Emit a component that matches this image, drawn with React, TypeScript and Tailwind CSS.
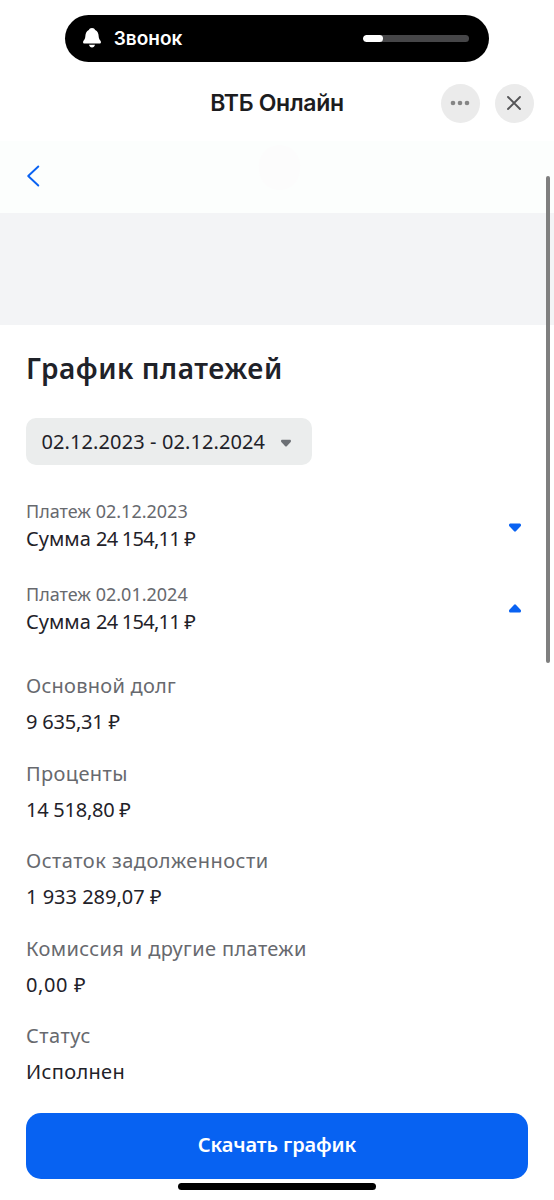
import React from 'react';

interface Payment {
  date: string;
  amount: string;
  open: boolean;
}

const payments: Payment[] = [
  { date: '02.12.2023', amount: '24 154,11 ₽', open: false },
  { date: '02.01.2024', amount: '24 154,11 ₽', open: true },
];

const details = [
  { label: 'Основной долг', value: '9 635,31 ₽', labelSpacing: 'tracking-[0.25px]', valueSpacing: 'tracking-[-0.2px]' },
  { label: 'Проценты', value: '14 518,80 ₽', labelSpacing: 'tracking-[0.38px]', valueSpacing: 'tracking-[-0.25px]' },
  { label: 'Остаток задолженности', value: '1 933 289,07 ₽', labelSpacing: 'tracking-[0.48px]', valueSpacing: 'tracking-normal' },
  { label: 'Комиссия и другие платежи', value: '0,00 ₽', labelSpacing: 'tracking-[0.37px]', valueSpacing: 'tracking-[0.6px]' },
  { label: 'Статус', value: 'Исполнен', labelSpacing: 'tracking-[0.5px]', valueSpacing: 'tracking-[0.35px]' },
];

function Caret({ up = false, className }: { up?: boolean; className: string }) {
  return (
    <svg viewBox="0 0 12 9" className={className} fill="currentColor">
      <path
        d={up
          ? 'M5.1.7a1.3 1.3 0 0 1 1.8 0l4.7 5.1c.9 1 .3 2.7-1.1 2.7h-9C.1 8.5-.5 6.8.4 5.8z'
          : 'M5.1 8.3a1.3 1.3 0 0 0 1.8 0l4.7-5.1C12.5 2.2 11.9.5 10.5.5h-9C.1.5-.5 2.2.4 3.2z'}
      />
    </svg>
  );
}

function RingerPill() {
  return (
    <div className="mx-auto mt-[14.5px] w-[424.5px] h-[47.5px] rounded-full bg-black flex items-center pl-[18px] pr-[20.5px]">
      <svg viewBox="0 0 54 59" className="w-[18px] h-[19.7px] shrink-0" fill="white">
        <path d="M27 0c5 0 8 2.500 9.500 6C44 9 46.500 17 47 25c.3 7 3 10 5.500 13.500 2.800 4 1 8-3 8h-45c-4 0-5.800-4-3-8C4 35 6.700 32 7 25 7.500 17 10 9 17.500 6 19 2.500 22 0 27 0z" />
        <path d="M18 50.500h18c-1 5-4.500 8-9 8s-8-3-9-8z" />
      </svg>
      <span className="ml-[13px] mt-[1px] text-[19px] leading-6 font-semibold text-white font-['Inter',sans-serif]">Звонок</span>
      <div className="ml-auto w-[106px] h-[7px] rounded-full bg-[#464648] overflow-hidden">
        <div className="w-[20px] h-full rounded-full bg-white" />
      </div>
    </div>
  );
}

function TitleBar() {
  return (
    <div className="relative h-[78.5px] flex items-center justify-center pt-[4px]">
      <h1 className="text-[23px] leading-8 font-semibold tracking-[-0.3px] text-[#1c1c1e] font-['Inter',sans-serif]">ВТБ Онлайн</h1>
      <div className="absolute right-[20.5px] top-[22px] flex gap-[15.5px]">
        <button className="size-[38.5px] rounded-full bg-[#ebebeb] flex items-center justify-center">
          <svg viewBox="0 0 20 6" className="w-[20px] h-[6px]" fill="#858585">
            <circle cx="3" cy="3" r="2.3" />
            <circle cx="10" cy="3" r="2.3" />
            <circle cx="17" cy="3" r="2.3" />
          </svg>
        </button>
        <button className="size-[38.5px] rounded-full bg-[#ebebeb] flex items-center justify-center">
          <svg viewBox="0 0 14 14" className="size-[14px]" stroke="#555557" strokeWidth="1.9" strokeLinecap="round">
            <path d="M1 1l12 12M13 1L1 13" />
          </svg>
        </button>
      </div>
    </div>
  );
}

export default function App() {
  return (
    <div className="relative w-[554px] h-[1200px] bg-white overflow-hidden flex flex-col text-[#1f2229] font-['Noto_Sans',sans-serif]">
      <RingerPill />
      <TitleBar />

      <div className="relative h-[72px] bg-[#fcfefd] flex items-center pl-[26px]">
        <svg viewBox="0 0 14 22" className="w-[14px] h-[22px] mb-[1px]" fill="none" stroke="#0962f2" strokeWidth="1.9" strokeLinecap="round" strokeLinejoin="round">
          <path d="M12.300 1.500L2.200 11l10.100 9.500" />
        </svg>
        <div className="absolute left-[259px] top-[4px] w-[41px] h-[45px] rounded-full bg-[#fcfcfc]" />
      </div>
      <div className="h-[112px] bg-[#f3f4f6]" />

      <main className="px-[26px] pt-[23px]">
        <h2 className="h-[40px] text-[28px] leading-[40px] font-semibold tracking-[0.55px] whitespace-nowrap">График платежей</h2>
        <button className="mt-[30px] w-[286px] h-[47px] rounded-[10px] bg-[#ebeded] flex items-center pl-[15.5px] pr-[21px] text-[20px] tracking-[0.1px] whitespace-nowrap">
          <span className="mt-[1px]">02.12.2023 - 02.12.2024</span>
          <Caret className="ml-auto mt-[3px] w-[10px] h-[8px] text-[#6c7075]" />
        </button>

        <div className="mt-[33px] flex flex-col gap-[28px]">
          {payments.map((p) => (
            <div key={p.date} className="h-[54.5px] flex items-center justify-between pr-[7px]">
              <div className="whitespace-nowrap">
                <div className="text-[18px] leading-[28px] text-[#67696e]">Платеж {p.date}</div>
                <div className="text-[20px] leading-[27px]">
                  Сумма <span className="tracking-[-0.75px]">{p.amount}</span>
                </div>
              </div>
              <Caret up={p.open} className={`w-[12px] h-[9px] text-[#0962f2] ${p.open ? 'mt-[3px]' : 'mt-[6px]'}`} />
            </div>
          ))}
        </div>

        <dl className="mt-[33.5px] flex flex-col gap-[15.5px] text-[20px] leading-[36px] whitespace-nowrap">
          {details.map((d) => (
            <div key={d.label}>
              <dt className={`text-[#67696e] ${d.labelSpacing}`}>{d.label}</dt>
              <dd className={d.valueSpacing}>{d.value}</dd>
            </div>
          ))}
        </dl>
      </main>

      <footer className="mt-auto px-[26px] pb-[10px] flex flex-col items-center gap-[4px]">
        <button className="w-full h-[66.5px] rounded-[15px] bg-[#0762f2] text-white text-[20px] font-semibold tracking-[-0.1px] pb-[1px]">
          Скачать график
        </button>
        <div className="w-[198px] h-[7px] rounded-full bg-black" />
      </footer>

      <div className="absolute right-[4px] top-[176px] w-[4px] h-[487px] rounded-full bg-[#7f7f7f]" />
    </div>
  );
}
